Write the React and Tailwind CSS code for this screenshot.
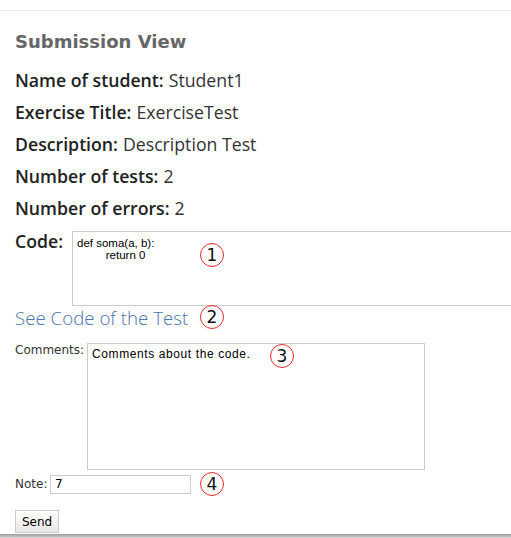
import React from "react";

const Marker = ({ n, className }) => (
  <span
    className={`absolute w-[24px] h-[24px] rounded-full border-[1.5px] border-[#e8262b] bg-white flex items-center justify-center font-['DejaVu_Sans',sans-serif] text-[17px] leading-none text-[#111] ${className}`}
  >
    {n}
  </span>
);

const Row = ({ label, value }) => (
  <div className="h-[32px] flex items-center text-[17.7px] font-['Open_Sans',sans-serif]">
    <span className="font-semibold text-[#222]">{label}</span>
    <span className="ml-[5px] text-[#333]">{value}</span>
  </div>
);

export default function App() {
  return (
    <div className="relative w-[511px] h-[538px] overflow-hidden bg-white font-['DejaVu_Sans',Verdana,sans-serif]">
      <div className="h-[11px] border-b border-[#ececec]" />
      <div className="px-[15px]">
        <h2 className="mt-[19px] text-[18px] font-bold text-[#666] leading-[24px]">
          Submission View
        </h2>
        <div className="mt-[10px]">
          <Row label="Name of student:" value="Student1" />
          <Row label="Exercise Title:" value="ExerciseTest" />
          <Row label="Description:" value="Description Test" />
          <Row label="Number of tests:" value="2" />
          <Row label="Number of errors:" value="2" />
        </div>
        <div className="relative mt-[7px] flex items-start">
          <span className="w-[57px] shrink-0 font-semibold font-['Open_Sans',sans-serif] text-[17.7px] text-[#222] leading-[18px] mt-[1px]">
            Code:
          </span>
          <div className="w-[450px] shrink-0 h-[75px] border border-[#ccc] font-['Liberation_Sans',sans-serif] text-[11.5px] leading-[12px] text-black px-[4px] pt-[5px] whitespace-pre">
            {"def soma(a, b):\n         return 0"}
          </div>
          <Marker n="1" className="left-[185px] top-[12px]" />
        </div>
        <div className="relative h-[24px] flex items-center">
          <a className="text-[18.7px] text-[#4d74ab] font-light font-['Open_Sans',sans-serif]">See Code of the Test</a>
          <Marker n="2" className="left-[185px] top-[-1px]" />
        </div>
        <div className="relative mt-[13px] flex items-start">
          <span className="text-[12px] text-[#333] leading-[14px] w-[72px] shrink-0">Comments:</span>
          <div className="w-[338px] shrink-0 h-[127px] border border-[#ccc] font-['Liberation_Sans',sans-serif] text-[12px] tracking-[0.6px] text-black px-[4px] pt-[3px] leading-[14px]">
            Comments about the code.
          </div>
          <Marker n="3" className="left-[255px] top-[1px]" />
        </div>
        <div className="relative mt-[4px] flex items-center h-[20px]">
          <span className="text-[12px] text-[#333] w-[35px] shrink-0">Note:</span>
          <div className="w-[141px] shrink-0 h-[19px] border border-[#ccc] text-[12px] text-black px-[4px] flex items-center">
            7
          </div>
          <Marker n="4" className="left-[185px] top-[-2px]" />
        </div>
        <button className="mt-[16px] w-[44px] h-[23px] border border-[#ccc] bg-gradient-to-b from-white to-[#e8e8e8] text-[12px] text-black flex items-center justify-center">
          Send
        </button>
      </div>
      <div className="absolute left-0 right-0 bottom-0 h-[4px] bg-gradient-to-b from-[#9a9a9a] to-[#d8d8d8]" />
    </div>
  );
}
